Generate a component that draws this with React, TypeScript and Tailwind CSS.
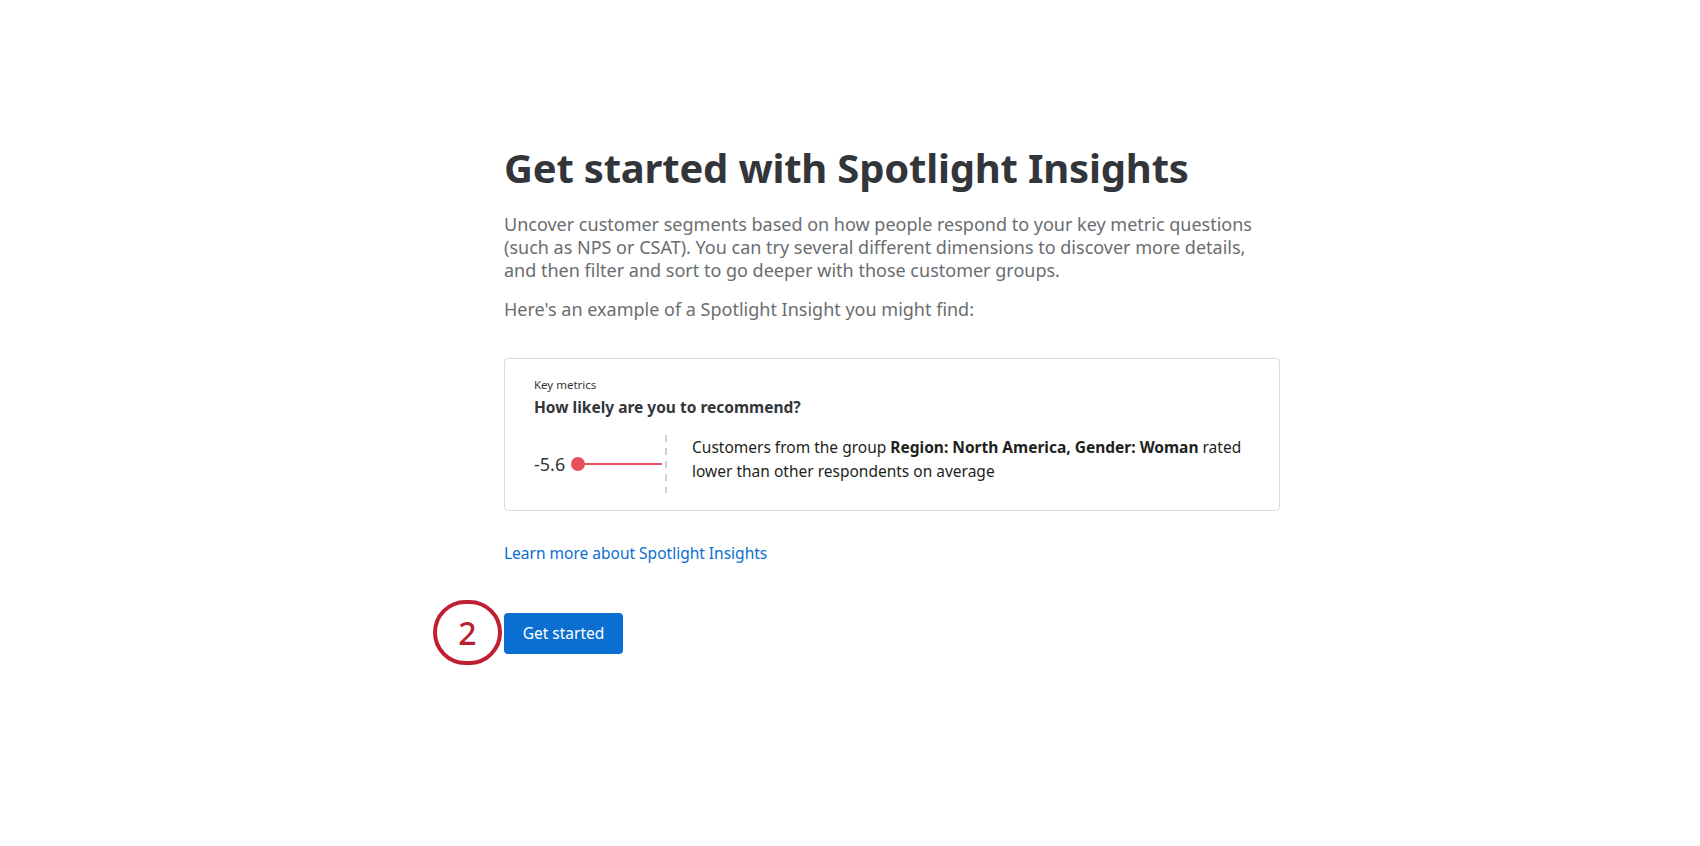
export default function App() {
  return (
    <div className="min-h-screen w-full bg-white font-['Noto_Sans','Open_Sans',sans-serif]">
      <div className="w-[1280px] pl-[504px] pt-[142px]">
        <h1 className="text-[40px] font-bold leading-[52px] text-[#32363a] tracking-[-0.2px]">
          Get started with Spotlight Insights
        </h1>
        <p className="mt-[19px] text-[18px] leading-[23px] text-[#6a6d70]">
          Uncover customer segments based on how people respond to your key metric questions
          <br />
          (such as NPS or CSAT). You can try several different dimensions to discover more details,
          <br />
          and then filter and sort to go deeper with those customer groups.
        </p>
        <p className="mt-[16px] text-[18px] leading-[23px] text-[#6a6d70]">
          Here's an example of a Spotlight Insight you might find:
        </p>

        {/* Example card */}
        <div className="mt-[37px] h-[153px] w-[776px] rounded-[4px] border border-[#d9dadc] pl-[29px] pt-[18px]">
          <p className="text-[11.5px] leading-[16px] text-[#32363a]">Key metrics</p>
          <p className="mt-[4px] text-[15.5px] font-bold leading-[20px] text-[#32363a]">
            How likely are you to recommend?
          </p>
          <div className="mt-[18px] flex items-start">
            <div className="flex h-[58px] w-[130px] items-center">
              <span className="text-[18px] leading-[20px] text-[#32363a]">-5.6</span>
              <svg width="92" height="16" viewBox="0 0 92 16" className="ml-[5px]">
                <line x1="9" y1="8" x2="92" y2="8" stroke="#e8505b" strokeWidth="2" />
                <circle cx="8" cy="8" r="7" fill="#e8505b" />
              </svg>
            </div>
            <svg width="4" height="58" viewBox="0 0 4 58">
              <line x1="2" y1="0" x2="2" y2="58" stroke="#cfd1d3" strokeWidth="2" strokeDasharray="7 6" />
            </svg>
            <p className="ml-[24px] text-[15.5px] leading-[24px] text-[#1d1f21]">
              Customers from the group <b>Region: North America, Gender: Woman</b> rated
              <br />
              lower than other respondents on average
            </p>
          </div>
        </div>

        <a href="#" className="mt-[31px] block text-[15.5px] leading-[22px] text-[#0b6ed0]">
          Learn more about Spotlight Insights
        </a>

        <div className="relative mt-[49px]">
          <button className="h-[41px] w-[119px] rounded-[4px] bg-[#0b6fd1] text-[15.5px] text-white">
            Get started
          </button>
          <div className="absolute left-[-71px] top-[-13px] flex h-[65px] w-[69px] items-center justify-center rounded-full border-[4px] border-[#c01f33] text-[32px] font-medium leading-none text-[#b8202f]">
            2
          </div>
        </div>
      </div>
    </div>
  );
}
